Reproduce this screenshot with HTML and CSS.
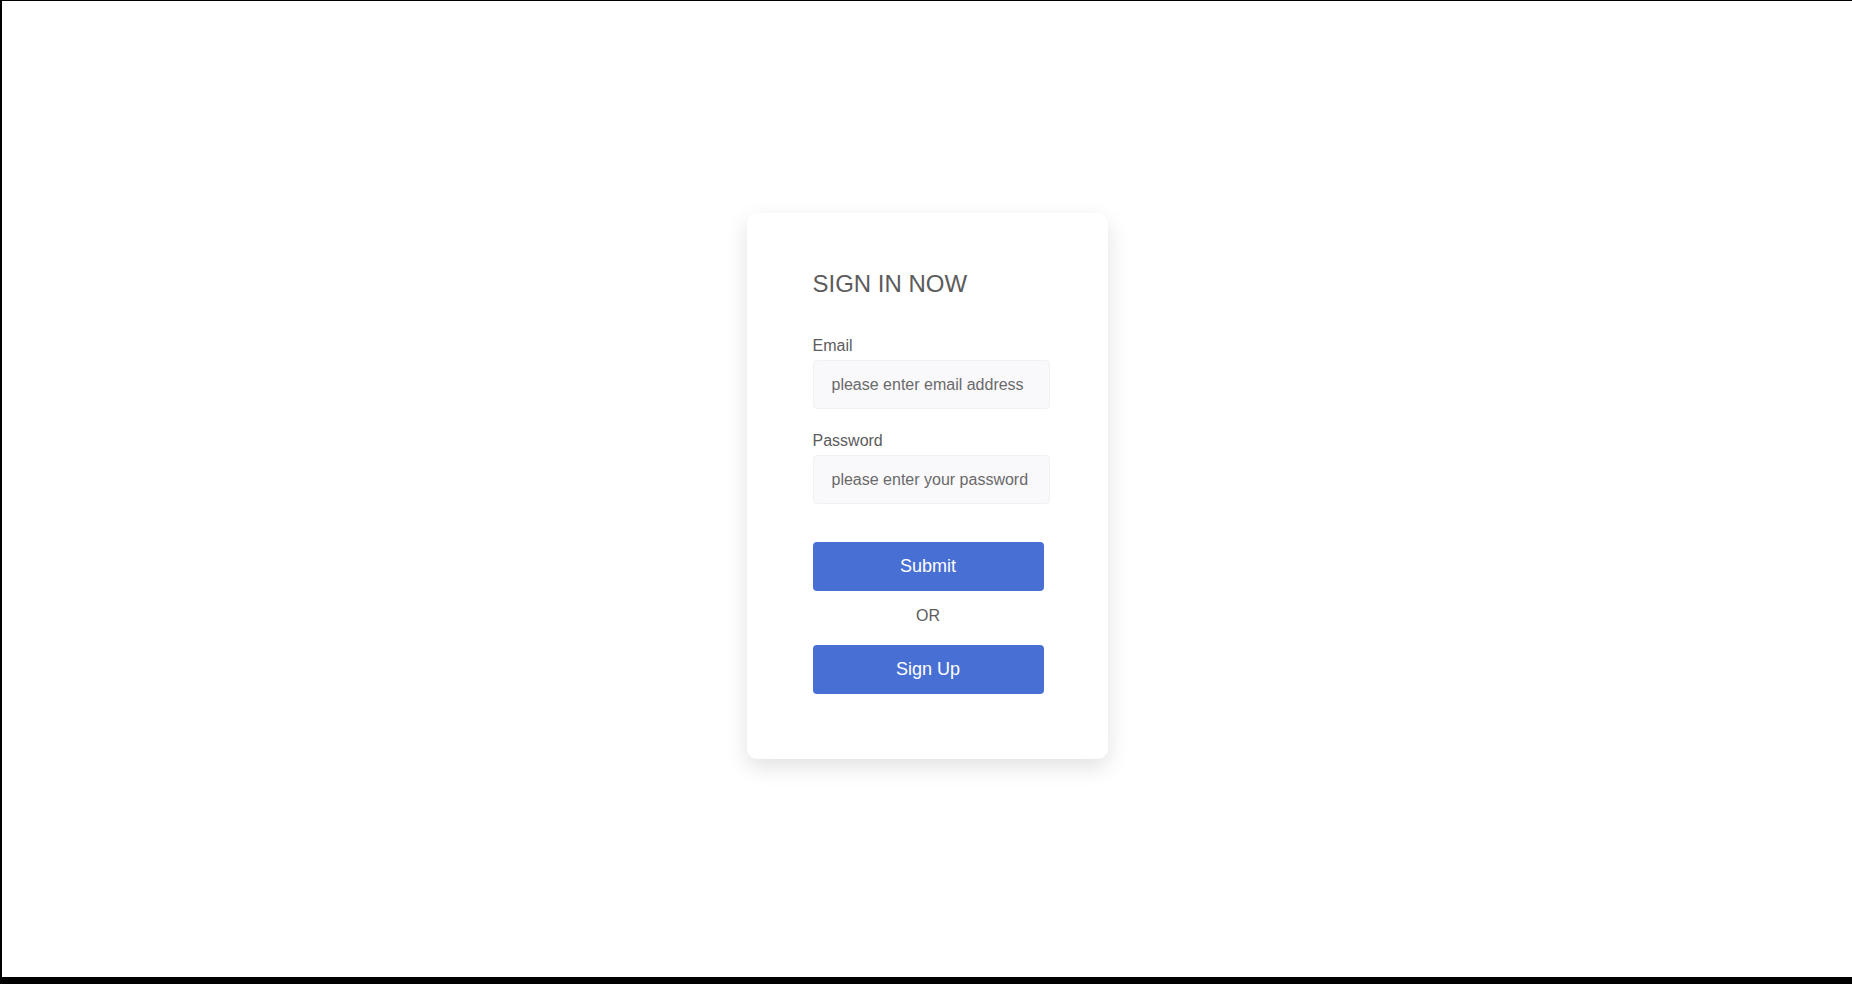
FILE: index.html
```html
<!DOCTYPE html>
<html lang="en">
<head>
    <meta charset="UTF-8">
    <meta name="viewport" content="width=device-width, initial-scale=1.0">
    <title>Sign In</title>
    <link rel="stylesheet" href="styles.css">
</head>
<body>
    <div class="login-box">
        <h1>SIGN IN NOW</h1>
        <form>
            <label for="email">Email</label>
            <input type="text" id="email" placeholder="please enter email address">
            <label for="password" class="second">Password</label>
            <input type="password" id="password" placeholder="please enter your password">
            <button type="submit" class="btn submit-btn">Submit</button>
            <p class="or">OR</p>
            <button type="button" class="btn">Sign Up</button>
        </form>
    </div>
</body>
</html>
```

FILE: styles.css
```css
html{
    background-color: #000;
}
body{
    margin: 0;
    height: 984px;
    box-sizing: border-box;
    border-top: 1px solid #000;
    border-left: 2px solid #000;
    border-bottom: 7px solid #000;
    background-color: #fff;
    font-family: "Liberation Sans", Arial, sans-serif;
    color: #5c5c5c;
    display: flex;
    justify-content: center;
    align-items: center;
}

.login-box{
    width: 361px;
    height: 546px;
    box-sizing: border-box;
    padding: 57px 0 0 66px;
    margin-bottom: 6px;
    background-color: #fff;
    border-radius: 10px;
    box-shadow: 0 8px 22px rgba(0, 0, 0, .12);
}

h1{
    margin: 0;
    font-size: 24px;
    font-weight: normal;
    line-height: 28px;
    color: #5c5c5c;
}

form{
    display: flex;
    flex-direction: column;
    align-items: flex-start;
    margin-top: 39px;
}

label{
    font-size: 16px;
    line-height: 18px;
    color: #5c5c5c;
}
label.second{
    margin-top: 23px;
}

input{
    margin-top: 5px;
    width: 237px;
    height: 49px;
    box-sizing: border-box;
    padding: 0 16px 0 18px;
    border: 1px solid #f1f0f4;
    border-radius: 4px;
    background-color: #f9f8fb;
    font-family: inherit;
    font-size: 16px;
    color: #5c5c5c;
    outline: none;
}
input::placeholder{
    color: #6a6a6a;
}

.btn{
    width: 231px;
    height: 49px;
    border: none;
    border-radius: 4px;
    background-color: #486fd4;
    color: #fff;
    font-family: inherit;
    font-size: 18px;
    cursor: pointer;
}
.submit-btn{
    margin-top: 38px;
}

.or{
    width: 231px;
    margin: 16px 0 20px;
    text-align: center;
    font-size: 16px;
    line-height: 18px;
    color: #5c5c5c;
}
```
